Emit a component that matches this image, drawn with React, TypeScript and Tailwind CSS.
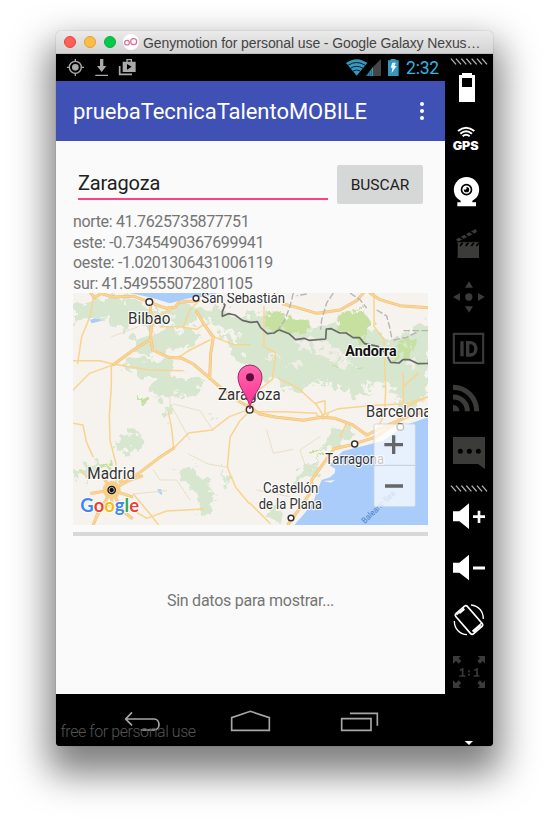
import type { ReactNode } from "react";

const GREY = "#3b3b39";

function Hatch({ className }: { className: string }) {
  return (
    <svg className={className} viewBox="15 0 144 21">
      {[33, 48, 64, 79, 95, 111, 126].map((x) => (
        <path key={x} d={`M${x} 2l15 17`} fill="none" stroke="#b5b5b5" strokeWidth="4" />
      ))}
    </svg>
  );
}

function Slot({ top, children }: { top: number; children: ReactNode }) {
  return (
    <svg className="h-[52px] w-12 shrink-0" viewBox={`15 ${top} 144 156`}>
      {children}
    </svg>
  );
}

function Sidebar() {
  return (
    <div className="flex w-12 flex-col bg-black">
      <Hatch className="mt-[4px] -mb-[4px] h-[7px] w-12 shrink-0" />
      <Slot top={33}>
        <path fill="#fff" fillRule="evenodd" d="M66 69h30v6h9v81H57V75h9zM66 84v27h30V84z" />
      </Slot>
      <Slot top={189}>
        <g fill="none" stroke="#fff" strokeWidth="6">
          <path d="M54 243q24-20 49 0M61 251q17-14 35 0M68 259q10-9 21 0" />
        </g>
        <text x="38" y="300" fill="#fff" fontFamily="Inter, Arial, sans-serif" fontWeight="900" fontSize="34" textLength="78" lengthAdjust="spacingAndGlyphs">GPS</text>
      </Slot>
      <Slot top={345}>
        <circle cx="79.500" cy="419" r="38" fill="#fff" />
        <path d="M62 450h35v7h11v12H52v-12h10z" fill="#fff" />
        <circle cx="79.500" cy="419" r="15" fill="none" stroke="#000" strokeWidth="5" />
        <circle cx="79.500" cy="419" r="8" fill="#000" />
        <circle cx="75" cy="414" r="5" fill="#fff" />
      </Slot>
      <Slot top={501}>
        <path fill={GREY} d="M53 575h64v49H53zM48 568l59-31 4 9-57 29z" />
        <path stroke="#000" strokeWidth="5" d="M60 588l8-10M77 588l8-10M94 588l8-10M109 588l8-10M58 560l11 8M74 552l10 8M89 544l11 8" />
        <path stroke="#000" strokeWidth="2" d="M53 575h64" />
      </Slot>
      <Slot top={-3}>
        <g fill={GREY}>
          <circle cx="86.500" cy="81" r="11" />
          <path d="M87 34l12 19H75zM87 128l12-19H75zM39 81l21-12v24zM134 81l-20-12v24z" />
        </g>
      </Slot>
      <Slot top={153}>
        <rect x="41.500" y="191.500" width="88" height="87" fill="none" stroke={GREY} strokeWidth="6.500" />
        <path d="M66 214v45M83 218v37h8c22 0 22-37 0-37z" fill="none" stroke={GREY} strokeWidth="10" />
      </Slot>
      <Slot top={309}>
        <g fill="none" stroke={GREY} strokeWidth="15">
          <path d="M39 352c40 0 71 32 71 72M39 381c25 0 43 18 43 43" />
        </g>
        <path d="M39 405c11 0 19 8 19 19H39z" fill={GREY} />
      </Slot>
      <Slot top={465}>
        <path fill={GREY} d="M39 501h96v96l-21-15H39z" />
        <g fill="#000">
          <circle cx="61" cy="544" r="7.500" />
          <circle cx="88" cy="544" r="7.500" />
          <circle cx="115" cy="544" r="7.500" />
        </g>
      </Slot>
      <Hatch className="mt-[8px] -mb-[2px] h-[7px] w-12 shrink-0" />
      <Slot top={30}>
        <path fill="#fff" d="M39 94h19l29-24v77l-29-23H39z" />
        <path stroke="#fff" strokeWidth="8" d="M99 110h36M117 92v37" />
      </Slot>
      <Slot top={186}>
        <path fill="#fff" d="M39 248h19l29-24v77l-29-23H39z" />
        <path stroke="#fff" strokeWidth="9" d="M99 264h36" />
      </Slot>
      <Slot top={342}>
        <g fill="none" stroke="#fff" strokeWidth="5">
          <rect x="64" y="380" width="46" height="80" rx="7" transform="rotate(-41 87 420)" />
          <path d="M50 404l22-19M97 454l29-26" strokeWidth="4" />
          <path d="M100 456l22-20M58 400l15-13" strokeWidth="6" />
          <path d="M93 375c22 2 37 18 37 42M43 423c0 24 17 41 38 41" strokeWidth="4" />
        </g>
      </Slot>
      <Slot top={498}>
        <g fill={GREY}>
          <path d="M39 528h24l-7 7 8 8-8 8-8-8-9 8zM135 528h-22l7 7-8 8 8 8 8-8 7 7zM39 624h24l-7-7 8-8-8-8-8 8-9-8zM135 624h-22l7-7-8-8 8-8 8 8 7-7z" />
        </g>
        <path d="M60 571l8-4v21M58 588h18M103 571l8-4v21M101 588h17M87 571v6M87 581v6" fill="none" stroke={GREY} strokeWidth="5" />
      </Slot>
      <svg className="mt-[38px] h-3 w-12 shrink-0" viewBox="15 762 144 36">
        <path d="M74 777h25l-12 12z" fill="#fff" />
      </svg>
    </div>
  );
}

const GREENS = [
  "M9 28L40 40 70 28 110 22 190 24 240 55 300 62 330 42 380 50 460 60 540 92V140L500 135 450 105 405 85 340 112 290 95 240 110 200 92 165 125 120 80 70 92 40 75 9 110z",
  "M175 150l45-8 50-18 80-12 50 20-35 35-60 20-40-12-25 18-30-8z",
  "M170 210l60-5 70 15 15 40 45 10 40 20-30 30-45-12-35 20-50-25 10-30-50-18-30-20z",
  "M315 528l45 12 10-28 15 38 28 25 0 22 25 10-14 45-14 22-38-10 12-30-18-40-28-22z",
  "M150 440l40-15 30 14-12 48-25-25-18 30-25-24z",
  "M20 540l60-30 30 12-20 30-40 15-30-8zM275 362l35-4-8 25-15 5z",
  "M440 130l60 20 60-10 40 40 90 10 50-15 60 30 80 15 50-20 60 30 80-15v75l-60 10-70-15-60-10-60 20-80-20-60 30-60-30-60-15z",
  "M540 70l80 5 60 30 60 5 90-30 80 40 50 35 50-30 64-35v130l-60 60-50-30-70-10-70-40-60 20-80-20-60 30-80-15-64-20z",
  "M975 260l45-15 54 10v60l-60 60-35-10zM820 270l60 10 30 30-35 15-40-22z",
  "M790 420l40-18 15 20-25 30-50 35-20-8zM670 560l45-38 35-10-10 35-45 20-15 25-25-5zM600 650l35 20 0 30-30-10z",
  "M455 540l18 12 0 40-12-20zM412 376l18 2-10 12z",
];

const BRIGHT = [
  "M590 70l50-5 30 28 50 5-5 25-60 10-40-20-30 5z",
  "M805 95l25-30 50-5 22 20 0 35-20 35-50-15-25-10z",
  "M985 160l35-8 15 20-30 25-25 10z",
  "M70 525l40-5 10 12-30 8zM200 318l25 15-5 14-18-12zM720 480l30-18-5 12-20 20zM745 505l20-15 0 18zM785 230l20-5-4 15zM850 235l24-5-4 14z",
];

const MOTORWAYS = [
  "M62 9l12 14 18-12 40 10 60-2 48 18 48 18 28-4 10-14 60-5",
  "M240 40l4 50-2 56 6 34 48 22 40 3 34 17 50 43 40 35 40 30 40 22",
  "M242 148l-52 32-60 44",
  "M380 65l22 38 28 38-8 50-3 74",
  "M540 352l30 20 50 10 80 9 55-9 40 3 50 18 45 32 60-28 60-26 64-20",
  "M150 575l55-24 60-46 46-30",
  "M655 702l32-44 38-56 0-32 24-34 44-60 52-12 70-22 70-46",
  "M80 680l45-80-30-45M125 600l55-30 35-12M125 600l-60 10M125 600l30 60 30 24M125 600l60 20M125 600v40M70 705l15-40 30-20",
  "M640 42l40 10 60 18 70-10 50-28 20-23M900 9l30 20 60 18 84 6",
];

const ROADS = [
  "M70 20l-10 60-25 60-12 80",
  "M9 212l80 0 40 10 110 18 100 2",
  "M9 300l50-50 66-24M124 226v60l-6 90 2 75 18 70 0 60",
  "M311 475l-6-60-10-50",
  "M311 475l45-46 70-9 52-40 50-18",
  "M540 362l-30 30-30 50-8 90 25 60 40 48",
  "M240 110l40-42 30-10M270 110l60 0 50 8 22-15M430 140l60 24 50 0M420 150l-60 30-40 25M340 110l20-50 20-20",
  "M582 50v120l35 18-10 80-50 40-10 50M625 265l60 30 55 50 24 38M755 376l50-20 110-10 95-5 60-20",
  "M912 9l0 100 30 40 5 150-3 70-20 45M1000 250v100M1010 350l64-30M1000 290l45-40",
  "M9 400l30 5 10 50 20 45M30 540l20 20 20-10M180 655l50 30 60-22 110-6",
  "M540 640l60 60M190 612l50 60 25 32M540 365l100 0 100 5",
  "M830 400l-20 40M735 340l30-8 0 40M740 375l20 12 15-14",
];

const MINOR = [
  "M355 492l60 30 60 10M250 540l20 30 50 0 40 60M590 420l20 70 60-12M750 440l-60 40 20 60M220 160l60 20 80-30M125 140l80-30M300 240l0 100 60 110M560 600l100 20M240 110l40 60M430 422l-40-60-80-20M190 612l100-10",
];

const CITY = [
  { x: 238, y: 36, r: 10 },
  { x: 378, y: 25, r: 8.5 },
  { x: 539, y: 359, r: 10 },
  { x: 991, y: 411, r: 10 },
  { x: 854, y: 462, r: 9 },
  { x: 663, y: 684, r: 8.5 },
];

const LABELS = [
  { t: "San Sebastián", x: 394, y: 40, w: 251, s: 42 },
  { t: "Bilbao", x: 174, y: 102, w: 127, s: 48 },
  { t: "Zaragoza", x: 444, y: 329, w: 188, s: 48 },
  { t: "Barcelona", x: 888, y: 380, w: 196, s: 48 },
  { t: "Tarragona", x: 766, y: 523, w: 176, s: 44 },
  { t: "Madrid", x: 52, y: 567, w: 143, s: 48 },
  { t: "Castellón", x: 579, y: 609, w: 166, s: 44 },
  { t: "de la Plana", x: 566, y: 657, w: 190, s: 44 },
];

function MapView() {
  return (
    <svg className="block h-[232px] w-[355px]" viewBox="9 9 1065 696" fontFamily="Roboto, sans-serif">
      <defs>
        <filter id="rough" x="-5%" y="-5%" width="110%" height="110%">
          <feTurbulence type="fractalNoise" baseFrequency="0.035" numOctaves="4" seed="4" />
          <feDisplacementMap in="SourceGraphic" scale="65" xChannelSelector="R" yChannelSelector="G" />
        </filter>
        <linearGradient id="pin" x1="0" y1="0" x2="0" y2="1">
          <stop offset="0" stopColor="#ff69af" />
          <stop offset="1" stopColor="#ff2e92" />
        </linearGradient>
      </defs>
      <rect width="1100" height="720" fill="#f6f2ed" />
      <g filter="url(#rough)">
        {GREENS.map((d) => <path key={d} d={d} fill="#d6e6cf" />)}
        {BRIGHT.map((d) => <path key={d} d={d} fill="#c6e0a0" />)}
        <path d="M660 150l70-5 30 25-50 12zM720 165l50-5 60 40-60 5zM780 205l50 5 30 20-40 5zM930 190l40 5-10 15zM270 80l50 4-30 14zM580 190l60 10-20 15zM650 215l50 0-20 15zM1000 215l40-5-10 20z" fill="#f1eee8" />
      </g>
      <path d="M180 9l45 10 25 6 50 15 50-14 28-5 35 0 30-12z" fill="#a9ccfb" />
      <path d="M1074 382l-64 22-30 20-40 28-70 18-52 14-40 42 18 10-2 14-14 12-25 8-10 24-16 44-30 38-26 29H1074z" fill="#a9ccfb" />
      <path d="M760 573l35-3-12 8z" fill="#f6f2ed" />
      <path d="M60 90l15-5 20 4-10 6-20 5zM262 598l12 0 2 18-10-8z" fill="#a9ccfb" />
      <g fill="none" strokeLinejoin="round" strokeLinecap="round">
        {MINOR.map((d) => <path key={d} d={d} stroke="#eadfc9" strokeWidth="3" />)}
        {ROADS.map((d) => <path key={d} d={d} stroke="#f9d48f" strokeWidth="4.500" />)}
        {MOTORWAYS.map((d) => <path key={d} d={d} stroke="#f0bf76" strokeWidth="9" />)}
        {MOTORWAYS.map((d) => <path key={d} d={d} stroke="#fbd492" strokeWidth="6" />)}
      </g>
      <circle cx="125" cy="600" r="27" fill="#f8cf89" />
      <path d="M455 35l10 10-8 20 0 14 18-8 20 4 22 16 25 6 20-2 10 18 20 18 20-2 15-10 30 12 20 18 25-4 15 6 50-4 2-30 15-1 25 13 20 0 20 14 20 0 15 18 40 8 22 20 16 28 25 2 12-10 20 0 25 12 32-1 0-14" fill="none" stroke="#686868" strokeWidth="5" strokeLinejoin="round" />
      <path d="M670 9l-10 40-15 40-20 30M790 9l-20 30-15 50-3 30M840 9l30 20 20 25M920 60l30 18 8 30 8 40M970 150l40-8 30-15M1000 122h74M710 12l-30 5" fill="none" stroke="#b4b3b6" strokeWidth="4" strokeDasharray="20 7" />

      {CITY.map((c) => (
        <circle key={c.x} cx={c.x} cy={c.y} r={c.r} fill="#fff" stroke="#333" strokeWidth="4.500" />
      ))}
      <circle cx="125" cy="600" r="13" fill="#111" />
      <circle cx="125" cy="600" r="8" fill="none" stroke="#ddd" strokeWidth="2.500" />
      <g stroke="#fff" strokeOpacity="0.85" strokeWidth="7" strokeLinejoin="round" paintOrder="stroke" fill="#333">
        {LABELS.map((l) => (
          <text key={l.t} x={l.x} y={l.y} fontSize={l.s} textLength={l.w} lengthAdjust="spacingAndGlyphs">{l.t}</text>
        ))}
        <text x="826" y="198" fontSize="45" fontWeight="700" textLength="154" lengthAdjust="spacingAndGlyphs" fill="#111">Andorra</text>
      </g>
      <text transform="translate(884 702) rotate(-44)" fontSize="25" fill="#4b7fc6" textLength="130" lengthAdjust="spacingAndGlyphs">Balearic Sea</text>

      <path d="M540 357c-3-40-36-60-36-96a36 36 0 0 1 72 0c0 36-33 56-36 96z" fill="url(#pin)" stroke="#a32767" strokeWidth="3" />
      <circle cx="540" cy="262" r="12" fill="#5a0e37" />

      <text x="31" y="666" fontSize="56" fontFamily="Lato, sans-serif" fontWeight="700" textLength="176" lengthAdjust="spacingAndGlyphs" stroke="#fff" strokeWidth="5" paintOrder="stroke">
        <tspan fill="#4285f4">G</tspan><tspan fill="#ea4335">o</tspan><tspan fill="#fbbc05">o</tspan><tspan fill="#4285f4">g</tspan><tspan fill="#34a853">l</tspan><tspan fill="#ea4335">e</tspan>
      </text>

      <rect x="912" y="402" width="124" height="248" rx="5" fill="#fff" fillOpacity="0.72" stroke="#c7d3df" strokeWidth="2.500" />
      <path d="M912 526h124" stroke="#c3ccd6" strokeWidth="3" />
      <path d="M943 464h56M971 436v56M945 588h54" stroke="#666" strokeWidth="10" />
    </svg>
  );
}

function TitleBar() {
  return (
    <div className="flex h-[23px] items-center rounded-t-[5px] border-b border-[#bdbdbd] bg-linear-to-b from-[#ebebeb] to-[#d3d3d3] pl-2">
      <div className="flex gap-2">
        <span className="size-3 rounded-full border border-[#e2463f] bg-[#ff5f57]" />
        <span className="size-3 rounded-full border border-[#e1a033] bg-[#ffbd45]" />
        <span className="size-3 rounded-full border border-[#12ac38] bg-[#05c94a]" />
      </div>
      <svg className="ml-[7px] size-4" viewBox="0 0 48 48">
        <circle cx="24" cy="24" r="24" fill="#fff" />
        <g fill="none" stroke="#e2688f" strokeWidth="3.500">
          <circle cx="12" cy="26" r="7" />
          <circle cx="32" cy="23" r="9" />
        </g>
      </svg>
      <span className="ml-1 mt-px whitespace-nowrap font-['Liberation_Sans',Arial,sans-serif] text-[14px] leading-none tracking-[-0.1px] text-[#444]">
        Genymotion for personal use - Google Galaxy Nexus…
      </span>
    </div>
  );
}

function StatusBar() {
  return (
    <div className="flex h-[27px] items-center justify-between bg-black pl-[10px] pr-[6px]">
      <svg className="h-[27px] w-[72px]" viewBox="48 87 216 81">
        <g fill="none" stroke="#aaa" strokeWidth="4">
          <circle cx="76" cy="127" r="18" />
          <path d="M76 102v9M76 143v10M51 127h9M92 127h10" />
          <path d="M136 151h38" />
          <path d="M209 123v25h37" strokeWidth="5" />
          <path d="M231 111v-7h13v7" />
        </g>
        <circle cx="76" cy="127" r="10" fill="#aaa" />
        <path d="M150 102h10v21h9l-14 18-14-18h9z" fill="#aaa" />
        <path fillRule="evenodd" d="M218 110h39v31h-39zM231 117v17l14-9z" fill="#aaa" />
      </svg>
      <div className="flex items-center">
        <svg className="mr-[5px] h-[27px] w-[56px]" viewBox="222 87 168 81">
          <path d="M225 114q32-23 64 0l-32 38z" fill="#3798bd" />
          <path d="M231 121q26-17 52 0M238 130q19-12 38 0M246 138q11-6 22 0" fill="none" stroke="#07202a" strokeWidth="3" />
          <path d="M330 102v51h-24v-27z" fill="#454545" />
          <path d="M306 126v27h-21z" fill="#3798bd" />
          <path d="M289 149v4M295 142v11M301 136v17" stroke="#07202a" strokeWidth="1.500" />
          <path d="M359 102h15v4h9v47h-32v-47h8z" fill="#3798bd" />
          <path d="M364 113h10l-3 10h6l-15 21 2-16h-5z" fill="#e8f7ff" />
        </svg>
        <span className="mt-[2px] font-[Roboto,sans-serif] text-[17.500px] leading-none tracking-[-0.2px] text-[#33b5e5]">2:32</span>
      </div>
    </div>
  );
}

function NavBar() {
  return (
    <div className="relative h-[52px] bg-black">
      <svg className="block h-[52px] w-[389px]" viewBox="18 42 1167 156">
        <g fill="none" stroke="#a6a6a6" strokeWidth="5">
          <path d="M246 97l-19 20 19 19M228 117h84c20 0 20 33 0 33h-40" />
          <path d="M545 151v-38l56-19 57 19v38z" />
          <path d="M875 116h88v35h-88zM900 100h82v37" />
        </g>
      </svg>
      <span className="absolute left-[4.500px] top-[28px] whitespace-nowrap font-[Roboto,sans-serif] text-[16px] font-light leading-[19px] tracking-[-0.43px] text-[#555]">
        free for personal use
      </span>
    </div>
  );
}

export default function App() {
  return (
    <div className="h-[826px] w-[549px] overflow-hidden bg-white pl-14 pt-[31px]">
      <div className="w-[437px] rounded-[5px] shadow-[0_0_1px_rgba(0,0,0,0.5),0_20px_36px_8px_rgba(0,0,0,0.5)]">
        <TitleBar />
        <div className="flex h-[692px] overflow-hidden rounded-b-[4px] bg-black">
          <div className="flex w-[389px] flex-col font-[Roboto,sans-serif]">
            <StatusBar />
            <header className="flex h-[60px] items-center justify-between bg-[#3f51b5] pl-[17px] pr-[21px]">
              <h1 className="mt-[2px] whitespace-nowrap text-[22px] leading-none tracking-[-0.04px] text-white">pruebaTecnicaTalentoMOBILE</h1>
              <div className="flex flex-col gap-[2.500px]">
                <i className="size-[4.500px] rounded-full bg-white" />
                <i className="size-[4.500px] rounded-full bg-white" />
                <i className="size-[4.500px] rounded-full bg-white" />
              </div>
            </header>
            <main className="flex h-[553px] flex-col bg-[#fafafa] px-[17px] pt-[24px]">
              <div className="flex h-[39px]">
                <div className="ml-[5px] flex h-[35px] w-[250px] items-center border-b-2 border-[#ff4081] pt-[3px] text-[20px] leading-none tracking-[-0.15px] text-[#212121]">
                  Zaragoza
                </div>
                <button className="ml-[9px] h-[39px] w-[86px] rounded-[2px] bg-[#d6d7d7] pt-[3px] text-[15.500px] leading-none text-[#212121]">BUSCAR</button>
              </div>
              <div className="mt-[8px] -mb-px whitespace-nowrap text-[16px] leading-[20.500px] tracking-[-0.35px] text-[#757575]">
                <p>norte: 41.7625735877751</p>
                <p>este: -0.7345490367699941</p>
                <p>oeste: -1.0201306431006119</p>
                <p>sur: 41.549555072801105</p>
              </div>
              <MapView />
              <div className="mt-[7px] h-[4px] shrink-0 bg-[#d8d8d8]" />
              <p className="mt-[53px] text-center text-[16px] leading-6 tracking-[-0.25px] text-[#757575]">Sin datos para mostrar...</p>
            </main>
            <NavBar />
          </div>
          <Sidebar />
        </div>
      </div>
    </div>
  );
}
